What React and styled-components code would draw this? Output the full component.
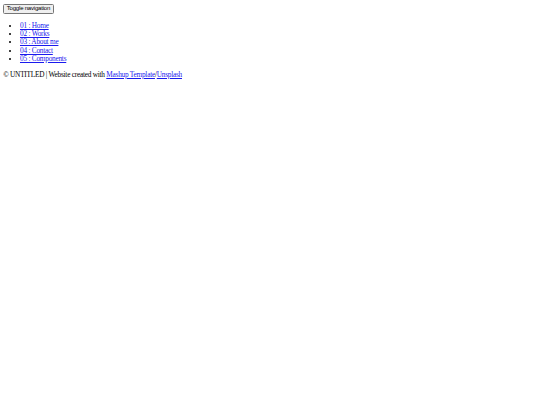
import React from 'react'
import styled, { createGlobalStyle } from 'styled-components'

const GlobalStyle = createGlobalStyle`
  body {
    margin: 3.2px;
    font-family: "Liberation Serif", "Times New Roman", serif;
    font-size: 7.3px;
    letter-spacing: -0.24px;
    color: #000;
    background: #fff;
  }
`;

const ToggleButton = styled.button`
  display: block;
  font-family: "Liberation Sans", Arial, sans-serif;
  font-size: 6px;
  letter-spacing: -0.2px;
  padding: 0.5px 2.6px;
  margin: 0.6px 0 0;
  border: 0.5px solid #767676;
  border-radius: 1.5px;
  background: #efefef;
  color: #000;
  line-height: 7.6px;
`;

const NavList = styled.ul`
  margin: 7.4px 0 7.6px;
  padding-left: 16.8px;
  list-style: disc;
`;

const NavItem = styled.li`
  line-height: 8.3px;
`;

const Link = styled.a`
  color: #1a1aee;
  text-decoration: underline;

  &:visited {
    color: #1a1aee;
  }
`;

const Footer = styled.p`
  margin: 7.6px 0;
  line-height: 8.3px;
`;

const items = ['01 : Home', '02 : Works', '03 : About me', '04 : Contact', '05 : Components']

const App = () => {
  return (
    <>
      <GlobalStyle />
      <ToggleButton>Toggle navigation</ToggleButton>
      <NavList>
        {items.map((item) => (
          <NavItem key={item}>
            <Link href="#">{item}</Link>
          </NavItem>
        ))}
      </NavList>
      <Footer>
        {'\u00A9'} UNTITLED | Website created with <Link href="#">Mashup Template</Link>/<Link href="#">Unsplash</Link>
      </Footer>
    </>
  )
}

export default App
